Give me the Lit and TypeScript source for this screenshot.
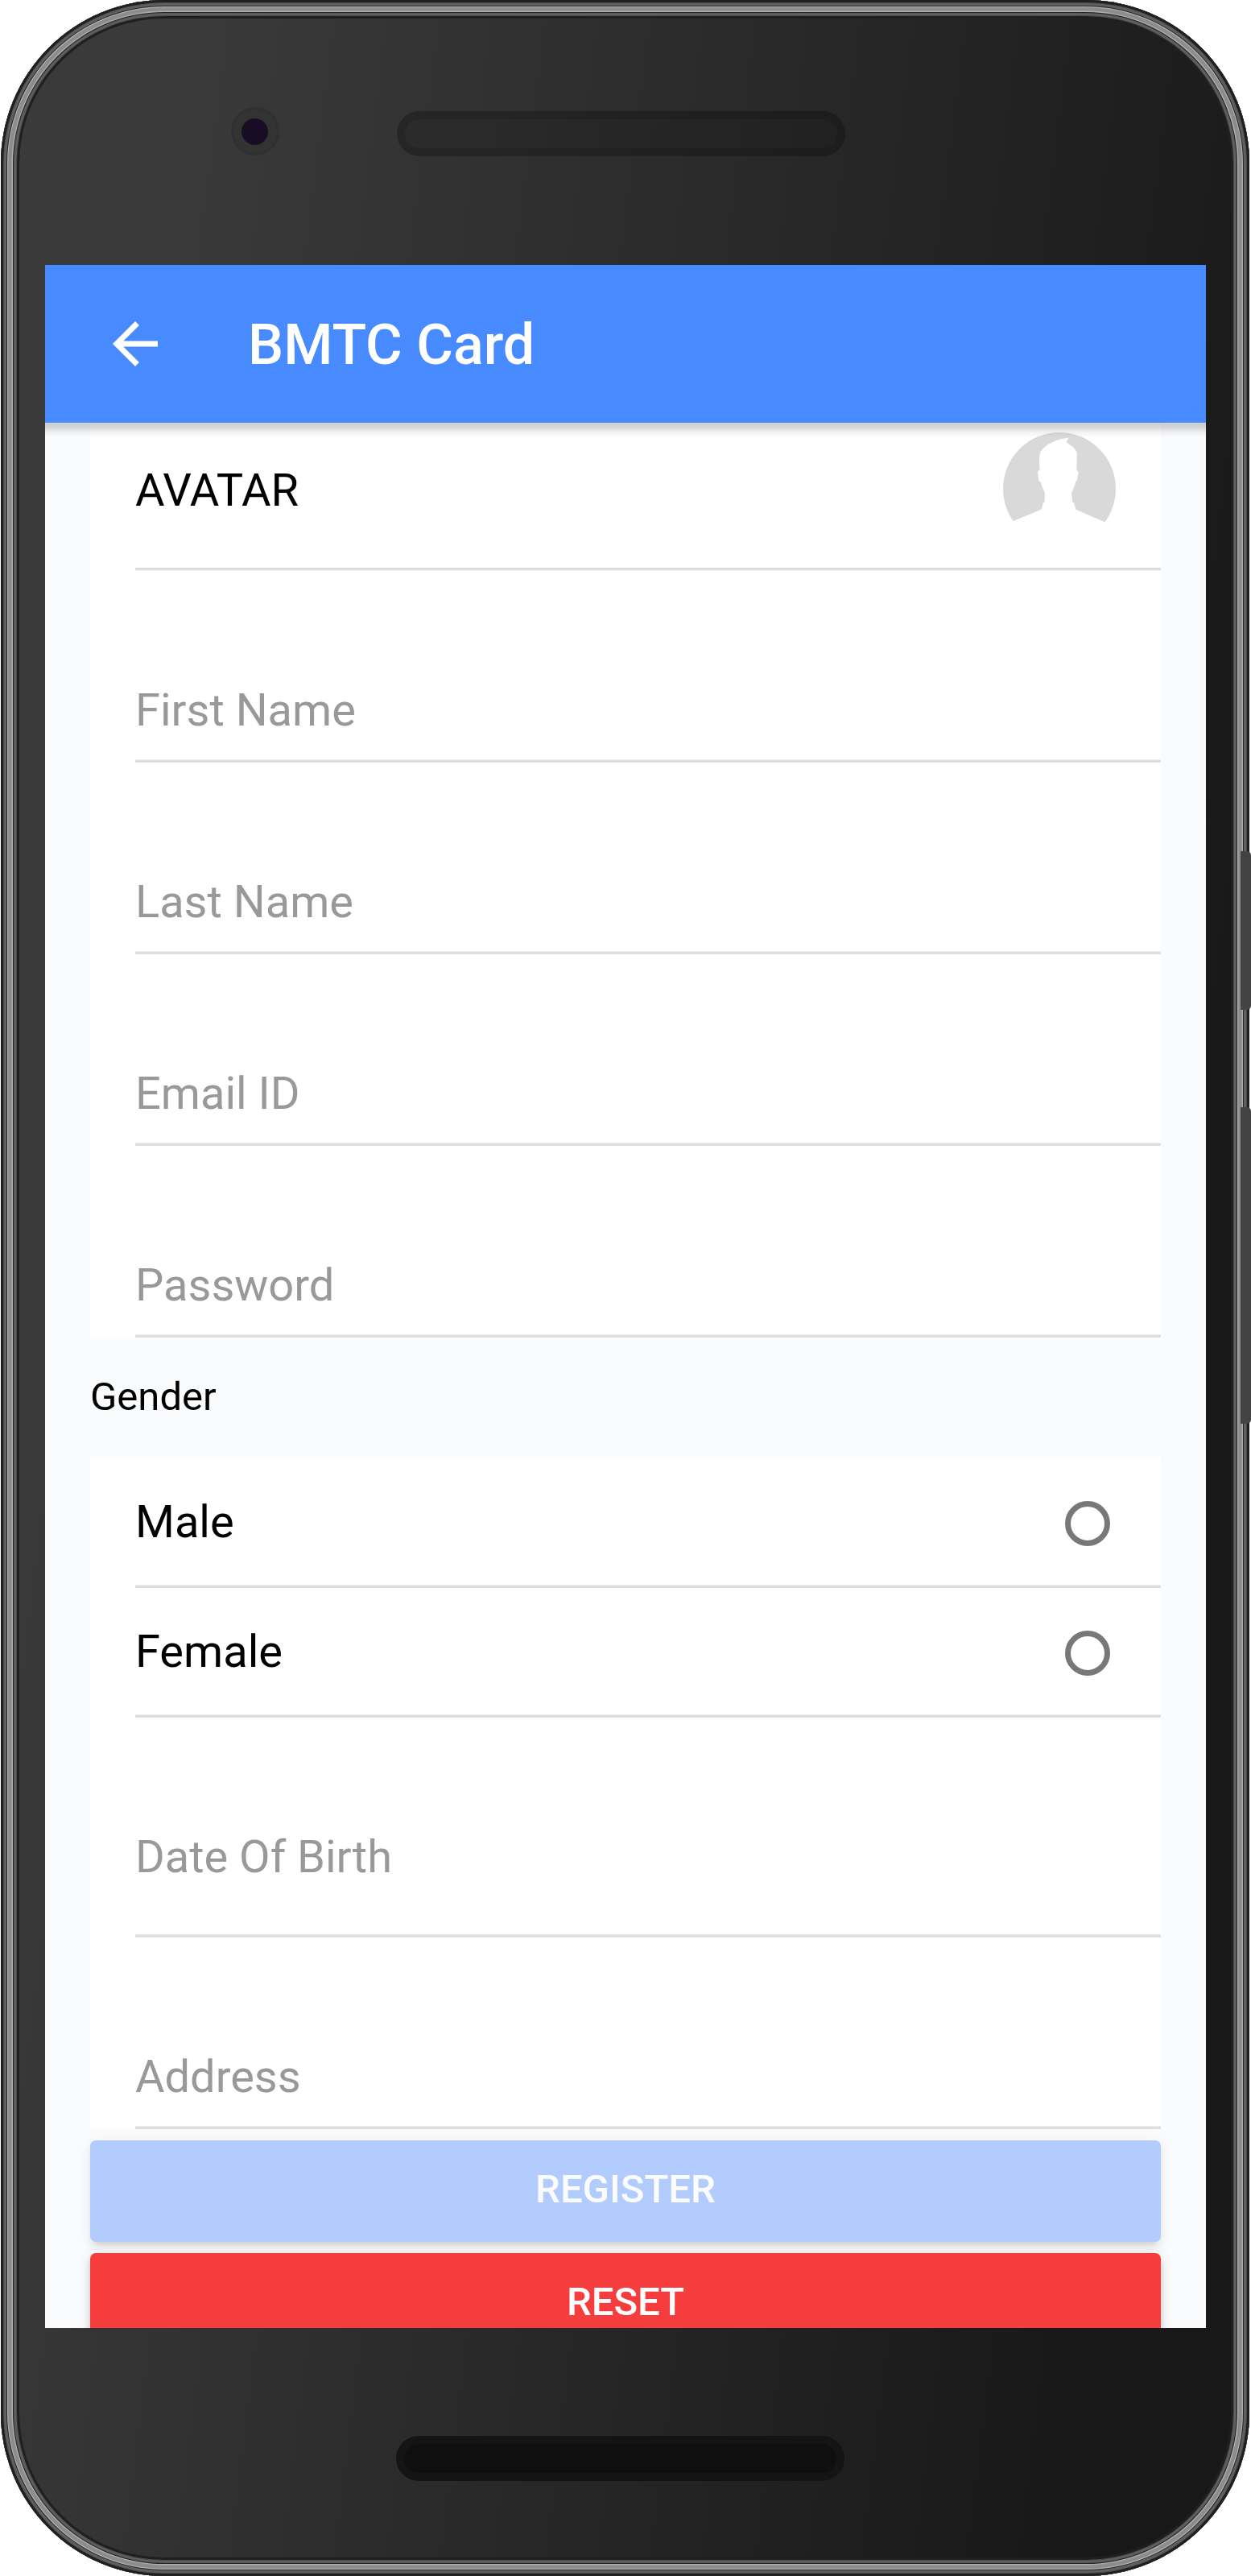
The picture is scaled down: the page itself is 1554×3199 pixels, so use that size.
import { LitElement, html, css } from "lit";
import { customElement, property } from "lit/decorators.js";

@customElement("form-field")
class FormField extends LitElement {
  @property() label = "";
  @property({ type: Boolean, reflect: true }) tall = false;

  static styles = css`
    :host {
      display: block;
      padding-left: 56px;
    }
    .inner {
      box-sizing: border-box;
      height: 238px;
      display: flex;
      align-items: flex-end;
      padding-bottom: 32px;
      background: linear-gradient(#eeeeee 1px, #dedede 1px) bottom / 100% 4px
        no-repeat;
      font-size: 56px;
      line-height: 66px;
      color: #999;
    }
    :host([tall]) .inner {
      height: 273px;
      padding-bottom: 67px;
    }
  `;

  render() {
    return html`<div class="inner">${this.label}</div>`;
  }
}

@customElement("radio-row")
class RadioRow extends LitElement {
  @property() label = "";

  static styles = css`
    :host {
      display: block;
      padding-left: 56px;
    }
    .inner {
      box-sizing: border-box;
      height: 161px;
      display: flex;
      align-items: center;
      justify-content: space-between;
      padding: 0 63px 3px 0;
      background: linear-gradient(#eeeeee 1px, #dedede 1px) bottom / 100% 4px
        no-repeat;
      font-size: 56px;
      line-height: 66px;
      color: #000;
    }
    .radio {
      box-sizing: border-box;
      width: 56px;
      height: 56px;
      margin-top: 4px;
      border: 7px solid #787878;
      border-radius: 50%;
    }
  `;

  render() {
    return html`<div class="inner">
      <span>${this.label}</span><span class="radio"></span>
    </div>`;
  }
}

@customElement("app-root")
class AppRoot extends LitElement {
  static styles = css`
    :host {
      display: block;
      position: relative;
      width: 1554px;
      height: 3199px;
      overflow: hidden;
      background: #fff;
      font-family: Roboto, "Liberation Sans", sans-serif;
    }
    .phone {
      box-sizing: border-box;
      width: 1551px;
      height: 3199px;
      margin-left: 0.7px;
      padding: 23px;
      border-radius: 203px;
      background: #1e1f1e;
      box-shadow: inset 0 0 0 3px #1e1f1e, inset 0 0 0 4px #4a4b4a,
        inset 0 0 0 7px #5f5f5f, inset 0 0 0 8px #252625,
        inset 0 0 0 9.3px #acadac, inset 0 0 0 13.5px #8c8c8c,
        inset 0 0 0 15px #acadac, inset 0 0 0 16px #232423,
        inset 0 0 0 17px #565756, inset 0 0 0 19px #5f5f5f,
        inset 0 0 0 20px #4a4b4a;
    }
    .body {
      box-sizing: border-box;
      width: 1505px;
      height: 3153px;
      border-radius: 180px;
      display: flex;
      flex-direction: column;
      background: linear-gradient(97.1deg, #3a3a3a 10.7%, #181818 88.8%);
    }
    .top {
      box-sizing: border-box;
      height: 306px;
      flex: none;
      display: flex;
      align-items: flex-start;
      padding: 110px 0 0 263px;
    }
    .camera {
      box-sizing: border-box;
      width: 60px;
      height: 60px;
      flex: none;
      border-radius: 50%;
      border: 3px solid #303030;
      background: #333;
      display: flex;
      align-items: center;
      justify-content: center;
    }
    .lens {
      width: 33px;
      height: 33px;
      border-radius: 50%;
      background: #180d24;
    }
    .speaker {
      box-sizing: border-box;
      width: 557px;
      height: 56px;
      border-radius: 30px;
      padding: 10px;
    }
    .speaker.ear {
      margin: 5px 0 0 146px;
      background: rgba(0, 0, 0, 0.14);
      box-shadow: inset 0 0 0 10px rgba(0, 0, 0, 0.12);
    }
    .speaker.chin {
      background: #141414;
    }
    .slot {
      height: 36px;
      border-radius: 20px;
      background: #0f0f0f;
    }
    .screen {
      width: 1442px;
      height: 2562px;
      flex: none;
      margin-left: 32.3px;
      overflow: hidden;
      background: #fafbfd;
    }
    .toolbar {
      box-sizing: border-box;
      position: relative;
      height: 196px;
      display: flex;
      align-items: center;
      padding-left: 70px;
      background: #488aff;
      color: #fff;
    }
    .toolbar::after {
      content: "";
      position: absolute;
      left: 0;
      top: 100%;
      width: 100%;
      height: 18px;
      background: linear-gradient(
        rgba(0, 0, 0, 0.14) 0,
        rgba(0, 0, 0, 0.19) 10%,
        rgba(0, 0, 0, 0.14) 35%,
        rgba(0, 0, 0, 0.05) 65%,
        rgba(0, 0, 0, 0) 100%
      );
    }
    .back {
      width: 84px;
      height: 84px;
      fill: #fff;
    }
    .title {
      margin-left: 98px;
      padding-top: 2px;
      font-size: 70px;
      line-height: 82px;
      font-weight: 500;
    }
    .content {
      padding: 0 56px;
    }
    .list {
      background: #fff;
    }
    .avatar-item {
      padding-left: 56px;
    }
    .avatar-inner {
      box-sizing: border-box;
      height: 184px;
      display: flex;
      align-items: center;
      justify-content: space-between;
      padding: 0 56px 20px 0;
      background: linear-gradient(#dedede 3px, #f4f4f4 3px) bottom / 100% 4px
        no-repeat;
      font-size: 56px;
      line-height: 66px;
    }
    .avatar-label {
      padding-top: 3px;
    }
    .avatar {
      width: 140px;
      height: 140px;
    }
    .legend {
      box-sizing: border-box;
      height: 150px;
      display: flex;
      align-items: center;
      padding-bottom: 2px;
      font-size: 49px;
      line-height: 58px;
      color: #000;
    }
    .button {
      box-sizing: border-box;
      height: 126px;
      margin-top: 14px;
      display: flex;
      align-items: center;
      justify-content: center;
      padding-bottom: 4px;
      border-radius: 7px;
      font-size: 49px;
      line-height: 58px;
      font-weight: 500;
      color: #fff;
      box-shadow: 0 7px 7px 0 rgba(0, 0, 0, 0.14),
        0 10.5px 3.5px -7px rgba(0, 0, 0, 0.2),
        0 3.5px 17.5px 0 rgba(0, 0, 0, 0.12);
    }
    .register {
      background: #488aff;
      opacity: 0.4;
    }
    .reset {
      background: #f53d3d;
    }
    .bottom {
      flex: 1;
      display: flex;
      align-items: flex-start;
      justify-content: center;
      padding: 134px 11px 0 0;
    }
    .side {
      position: absolute;
      left: 1541px;
      width: 12.6px;
      border-radius: 0 5px 5px 0;
      background: #434343;
    }
    .power {
      top: 1057px;
      height: 197px;
    }
    .volume {
      top: 1375px;
      height: 393px;
    }
  `;

  render() {
    return html`
      <div class="phone">
        <div class="body">
          <div class="top">
            <div class="camera"><div class="lens"></div></div>
            <div class="speaker ear"></div>
          </div>
          <div class="screen">
            <header class="toolbar">
              <svg class="back" viewBox="0 0 24 24">
                <path
                  d="M20 11H7.8l5.6-5.6L12 4l-8 8 8 8 1.4-1.4L7.8 13H20v-2z"
                />
              </svg>
              <div class="title">BMTC Card</div>
            </header>
            <main class="content">
              <div class="list">
                <div class="avatar-item">
                  <div class="avatar-inner">
                    <span class="avatar-label">AVATAR</span>
                    <svg class="avatar" viewBox="276 111 420 420">
                      <circle cx="486" cy="321" r="210" fill="#d9d9d9" />
                      <path
                        fill="#fff"
                        d="M521 131C480 134 430 155 414 186L411 205 411 228 413 252 405 255 409 290 417 297 421 312 432 336 431 370 425 374 421 392 416 399 315 441 270 460V540H700V465L655 445 547 398 541 374 534 370 531 336 541 315 547 295 552 290 557 258 550 252 552 190C547 166 525 160 512 146Z"
                      />
                    </svg>
                  </div>
                </div>
                <form-field label="First Name"></form-field>
                <form-field label="Last Name"></form-field>
                <form-field label="Email ID"></form-field>
                <form-field label="Password"></form-field>
              </div>
              <div class="legend">Gender</div>
              <div class="list">
                <radio-row label="Male"></radio-row>
                <radio-row label="Female"></radio-row>
                <form-field label="Date Of Birth" tall></form-field>
                <form-field label="Address"></form-field>
              </div>
              <div class="button register">REGISTER</div>
              <div class="button reset">RESET</div>
            </main>
          </div>
          <div class="bottom">
            <div class="speaker chin"><div class="slot"></div></div>
          </div>
        </div>
      </div>
      <div class="side power"></div>
      <div class="side volume"></div>
    `;
  }
}
